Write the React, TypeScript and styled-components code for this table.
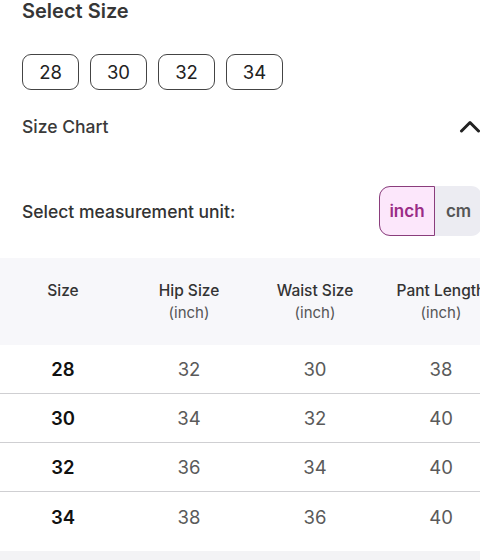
import React from "react";
import styled, { createGlobalStyle } from "styled-components";

const sizes = ["28", "30", "32", "34"];

const rows = [
  { size: "28", hip: "32", waist: "30", length: "38" },
  { size: "30", hip: "34", waist: "32", length: "40" },
  { size: "32", hip: "36", waist: "34", length: "40" },
  { size: "34", hip: "38", waist: "36", length: "40" },
];

const columns = ["Hip Size", "Waist Size", "Pant Length"];

const App = () => {
  return (
    <>
      <GlobalStyle />
      <Page>
        <Title>Select Size</Title>
        <SizeList>
          {sizes.map((s) => (
            <SizeButton key={s}>{s}</SizeButton>
          ))}
        </SizeList>
        <ChartHeader>
          <ChartTitle>Size Chart</ChartTitle>
          <svg width="24" height="16" viewBox="0 0 24 16">
            <path
              d="M3.5 13 L12 4.5 L20.5 13"
              fill="none"
              stroke="#222"
              strokeWidth="3"
              strokeLinecap="round"
              strokeLinejoin="round"
            />
          </svg>
        </ChartHeader>
        <UnitRow>
          <UnitLabel>Select measurement unit:</UnitLabel>
          <Toggle>
            <ToggleOption $active>inch</ToggleOption>
            <ToggleOption>cm</ToggleOption>
          </Toggle>
        </UnitRow>
        <Table>
          <HeadRow>
            <HeadCell>Size</HeadCell>
            {columns.map((c) => (
              <HeadCell key={c}>
                {c}
                <Unit>(inch)</Unit>
              </HeadCell>
            ))}
          </HeadRow>
          {rows.map((r, i) => (
            <BodyRow key={r.size} $last={i === rows.length - 1}>
              <Cell $strong>{r.size}</Cell>
              <Cell>{r.hip}</Cell>
              <Cell>{r.waist}</Cell>
              <Cell>{r.length}</Cell>
            </BodyRow>
          ))}
        </Table>
        <Footer />
      </Page>
    </>
  );
};

const GlobalStyle = createGlobalStyle`
  body {
    margin: 0;
    background: #fff;
    overflow: hidden;
    font-family: Inter, "Noto Sans", sans-serif;
  }
`;

const Page = styled.div`
  width: 504px;
  box-sizing: border-box;
  padding: 0 22px;
  color: #333;
`;

const Title = styled.div`
  font-size: 20px;
  font-weight: 600;
  line-height: 22px;
  color: #363636;
`;

const SizeList = styled.div`
  display: flex;
  gap: 11px;
  margin-top: 32px;
`;

const SizeButton = styled.div`
  width: 57px;
  height: 36px;
  box-sizing: border-box;
  display: flex;
  align-items: center;
  justify-content: center;
  border: 1px solid #444;
  border-radius: 9px;
  font-size: 18.5px;
  color: #222;
`;

const ChartHeader = styled.div`
  display: flex;
  align-items: center;
  justify-content: space-between;
  margin-top: 24px;
  height: 24px;
`;

const ChartTitle = styled.div`
  font-size: 17.5px;
  font-weight: 500;
  color: #3a3a3a;
`;

const UnitRow = styled.div`
  display: flex;
  align-items: center;
  justify-content: space-between;
  margin-top: 48px;
`;

const UnitLabel = styled.div`
  font-size: 17.5px;
  font-weight: 500;
  color: #333;
`;

const Toggle = styled.div`
  display: flex;
  height: 50px;
  border-radius: 11px;
  background: #ececf2;
`;

const ToggleOption = styled.div<{ $active?: boolean }>`
  display: flex;
  align-items: center;
  justify-content: center;
  box-sizing: border-box;
  width: ${({ $active }) => ($active ? "56px" : "47px")};
  font-size: 17px;
  font-weight: 600;
  border-radius: 11px 0 0 11px;
  color: ${({ $active }) => ($active ? "#9a2c86" : "#555")};
  background: ${({ $active }) => ($active ? "#fce7fb" : "transparent")};
  border: ${({ $active }) => ($active ? "1.5px solid #8a3d7c" : "none")};
`;

const Table = styled.div`
  margin: 22px -22px 0;
`;

const Grid = styled.div`
  display: grid;
  grid-template-columns: repeat(4, 126px);
  box-sizing: border-box;
`;

const HeadRow = styled(Grid)`
  background: #f7f7fa;
  height: 87px;
  padding-top: 23px;
  align-items: start;
`;

const HeadCell = styled.div`
  display: flex;
  flex-direction: column;
  align-items: center;
  gap: 2px;
  font-size: 15.5px;
  font-weight: 500;
  color: #333;
  line-height: 20px;
  white-space: nowrap;
`;

const Unit = styled.span`
  font-size: 15px;
  font-weight: 400;
  color: #555;
`;

const BodyRow = styled(Grid)<{ $last?: boolean }>`
  height: 49px;
  align-items: center;
  border-bottom: ${({ $last }) => ($last ? "none" : "1px solid #cfcfd2")};
`;

const Cell = styled.div<{ $strong?: boolean }>`
  text-align: center;
  font-size: 18.5px;
  font-weight: ${({ $strong }) => ($strong ? 600 : 400)};
  color: ${({ $strong }) => ($strong ? "#111" : "#5a5a5a")};
`;

const Footer = styled.div`
  margin: 10px -22px 0;
  height: 20px;
  background: #f3f3f5;
`;

export default App;
